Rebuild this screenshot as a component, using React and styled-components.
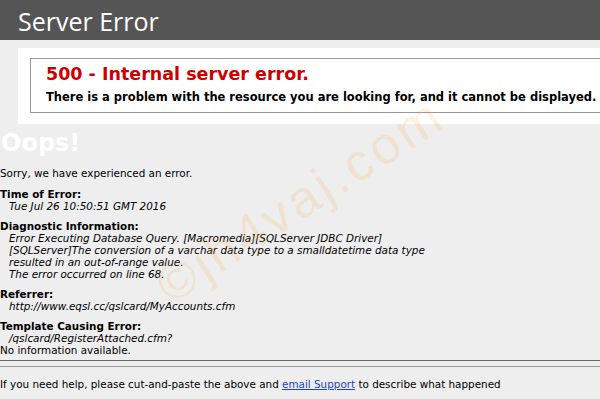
import React from 'react';
import styled, { createGlobalStyle } from 'styled-components';

const GlobalStyle = createGlobalStyle`
  html, body {
    margin: 0;
    padding: 0;
    background: #eeeeee;
  }
  body {
    font-family: "DejaVu Sans", Verdana, sans-serif;
    font-size: 10.4px;
    color: #000;
    overflow: hidden;
  }
`;

const Page = styled.div`
  position: relative;
  width: 600px;
  height: 399px;
  overflow: hidden;
`;

const Header = styled.header`
  height: 40px;
  background: #555555;
  display: flex;
  align-items: center;
  padding-left: 18px;

  h1 {
    margin: 0;
    color: #fff;
    font-family: "Open Sans", "Noto Sans", sans-serif;
    font-weight: 400;
    font-size: 25px;
    line-height: 1;
    margin-top: 2px;
  }
`;

const Content = styled.div`
  margin: 8px 0 0 18px;
  padding: 10px 0 11px 12px;
  background: #fff;
`;

const Fieldset = styled.div`
  border: 1px solid #999;
  border-right: none;
  padding: 4px 15px 7px 15px;
  white-space: nowrap;

  h2 {
    margin: 0;
    color: #cc0000;
    font-size: 17.5px;
    font-weight: bold;
    line-height: 22px;
  }

  h3 {
    margin: 5px 0 0;
    font-size: 11.5px;
    font-weight: bold;
    line-height: 15px;
  }
`;

const Oops = styled.h1`
  margin: 5px 0 0 1px;
  color: #fff;
  font-size: 24px;
  font-weight: bold;
  line-height: 28px;
`;

const Intro = styled.p`
  margin: 10px 0 9px;
  line-height: 12px;
`;

const Block = styled.div`
  margin-bottom: ${p => (p.$tight ? '0' : '8px')};
  line-height: 12px;
`;

const Label = styled.div`
  font-weight: bold;
`;

const Detail = styled.div`
  font-style: italic;
  padding-left: 9px;
`;

const Rule = styled.hr`
  margin: 4px 0 0;
  height: 5px;
  border: none;
  border-top: 1px solid #6a6a6a;
  border-bottom: 1px solid #9a9a9a;
`;

const Footer = styled.p`
  margin: 11px 0 0;
  line-height: 12px;
  white-space: nowrap;

  a {
    color: #1f3fcf;
    text-decoration: underline;
  }
`;

const Watermark = styled.span`
  position: absolute;
  left: 300px;
  top: 200px;
  transform: translate(-50%, -50%) rotate(-33deg);
  font-family: "Liberation Sans", Arial, sans-serif;
  font-size: 52px;
  letter-spacing: 4px;
  color: rgba(255, 160, 40, 0.15);
  white-space: nowrap;
  pointer-events: none;
`;

const details = [
  { label: 'Time of Error:', lines: ['Tue Jul 26 10:50:51 GMT 2016'] },
  {
    label: 'Diagnostic Information:',
    lines: [
      'Error Executing Database Query. [Macromedia][SQLServer JDBC Driver]',
      '[SQLServer]The conversion of a varchar data type to a smalldatetime data type',
      'resulted in an out-of-range value.',
      'The error occurred on line 68.',
    ],
  },
  { label: 'Referrer:', lines: ['http://www.eqsl.cc/qslcard/MyAccounts.cfm'] },
];

export default function App() {
  return (
    <Page>
      <GlobalStyle />
      <Header>
        <h1>Server Error</h1>
      </Header>
      <Content>
        <Fieldset>
          <h2>500 - Internal server error.</h2>
          <h3>There is a problem with the resource you are looking for, and it cannot be displayed.</h3>
        </Fieldset>
      </Content>
      <Oops>Oops!</Oops>
      <Intro>Sorry, we have experienced an error.</Intro>
      {details.map(d => (
        <Block key={d.label}>
          <Label>{d.label}</Label>
          {d.lines.map(l => (
            <Detail key={l}>{l}</Detail>
          ))}
        </Block>
      ))}
      <Block $tight>
        <Label>Template Causing Error:</Label>
        <Detail>/qslcard/RegisterAttached.cfm?</Detail>
        <div>No information available.</div>
      </Block>
      <Rule />
      <Footer>
        If you need help, please cut-and-paste the above and <a href="#">email Support</a> to describe what happened
      </Footer>
      <Watermark>©jh4vaj.com</Watermark>
    </Page>
  );
}
